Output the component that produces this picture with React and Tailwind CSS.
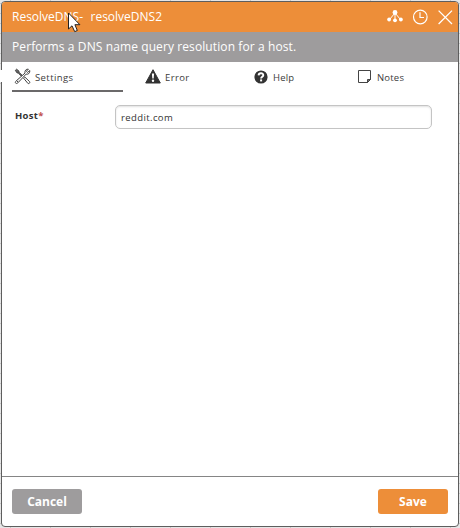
import React from 'react';

function NodesIcon() {
  return (
    <svg width="16" height="13" viewBox="0 0 16 13" className="-mt-px" fill="#fff" stroke="#fff">
      <path d="M8 3L2.5 9.5M8 3V10M8 3L13.5 9.5" fill="none" strokeWidth="1" />
      <g stroke="none">
        <circle cx="8" cy="2.5" r="2.4" />
        <circle cx="2.1" cy="9.5" r="1.9" />
        <circle cx="8" cy="10.3" r="1.9" />
        <circle cx="13.9" cy="9.5" r="1.9" />
      </g>
    </svg>
  );
}

function ClockIcon() {
  return (
    <svg width="16" height="16" viewBox="0 0 16 16" className="-mt-px" fill="none" stroke="#fff" strokeWidth="1.2">
      <circle cx="8.3" cy="8" r="6.8" />
      <path d="M8 3.2V8.5H12" />
    </svg>
  );
}

function CloseIcon() {
  return (
    <svg width="16" height="16" viewBox="0 0 16 16" className="-mt-px" fill="none" stroke="#fff" strokeWidth="1.3">
      <path d="M1.6 1.6L15 15M15 1.6L1.6 15" />
    </svg>
  );
}

function ToolsIcon() {
  return (
    <svg width="17" height="17" viewBox="0 0 17 17" fill="#fff" stroke="#444" strokeWidth="1" strokeLinejoin="round">
      <path d="M1.3 2.4L2.6 1.2L5 3.2L5 4.2L8.8 8L8 8.8L4.2 5L3.2 5Z" fill="#666" />
      <path d="M9.6 10.2L10.8 9L15.6 13.6C16.4 14.6 15 16.2 13.9 15.4Z" />
      <path d="M11 5.1C10.4 2.7 12.2 .7 14.4 1.2L12.4 3.2L13.5 4.5L15.8 2.5C16.2 5 14.2 6.8 12.1 6.1L3.8 14.9C2.3 16.5 .4 14.7 1.9 13.2Z" />
      <path d="M3 14L4.1 12.9" />
    </svg>
  );
}

function WarningIcon() {
  return (
    <svg width="16" height="15" viewBox="0 0 16 15">
      <path d="M8 .7L15.3 14H.7Z" fill="#333" stroke="#333" strokeLinejoin="round" />
      <path d="M6.9 4.6H9.1L8.7 9.6H7.3Z" fill="#fff" />
      <circle cx="8" cy="11.7" r="1.2" fill="#fff" />
    </svg>
  );
}

function HelpIcon() {
  return (
    <svg width="14" height="14" viewBox="0 0 14 14" className="mt-px">
      <circle cx="7" cy="7" r="6.6" fill="#333" />
      <path d="M4.6 5.4C4.7 2.5 9.4 2.5 9.3 5.1C9.2 6.7 7.1 6.7 7.1 8.6" fill="none" stroke="#fff" strokeWidth="1.9" />
      <rect x="6.1" y="9.4" width="2" height="2" fill="#fff" />
    </svg>
  );
}

function NoteIcon() {
  return (
    <svg width="14" height="14" viewBox="0 0 14 14" className="mt-px" fill="none" stroke="#444" strokeWidth="1">
      <path d="M.5 .5H12.5V9.5L9.5 12.5H.5Z" />
      <path d="M9.5 12.5V9.5H12.5Z" fill="#777" />
    </svg>
  );
}

function Tab({ icon, label, active, className, labelClass }) {
  return (
    <div className={`flex h-[30px] items-center border-b-2 ${active ? 'border-[#6b696a]' : 'border-transparent'} ${className}`}>
      <span className="flex h-4 items-center">{icon}</span>
      <span className={`mt-[3px] text-[9.5px] leading-4 text-[#3c3c3c] ${labelClass}`}>{label}</span>
    </div>
  );
}

export default function App() {
  return (
    <div className="relative h-[528px] w-[460px] overflow-hidden bg-[#e6e6e6] bg-[linear-gradient(#c6c6c6_1px,transparent_1px),linear-gradient(90deg,#c6c6c6_1px,transparent_1px)] bg-[size:10px_10px,40px_40px] bg-[position:0_3px,10px_0] pt-px pl-px font-['Open_Sans','Noto_Sans',sans-serif] text-[#333]">
      <div className="flex h-[526px] w-[458px] flex-col overflow-hidden rounded-[4px] border border-[#5e5e5e] bg-white">
        <header className="flex h-[30px] shrink-0 items-center justify-between bg-[#ed8e39] pr-[5px] pl-[10px] text-white">
          <h1 className="flex text-[12px] leading-4 font-medium whitespace-pre">
            <span className="w-[78.5px]">ResolveDNS- </span>
            <span>resolveDNS2</span>
          </h1>
          <div className="flex items-center gap-[9px]">
            <NodesIcon />
            <ClockIcon />
            <CloseIcon />
          </div>
        </header>
        <p className="h-[30px] shrink-0 bg-[#9e9c9d] pl-[10px] text-[12px] leading-[30px] font-medium tracking-[0.1px] text-white">
          Performs a DNS name query resolution for a host.
        </p>
        <nav className="flex shrink-0 pl-[10px]">
          <Tab icon={<ToolsIcon />} label="Settings" active className="w-[111px] pl-[2px]" labelClass="ml-[4px] tracking-[0.4px]" />
          <Tab icon={<WarningIcon />} label="Error" className="w-[109px] pl-[22px]" labelClass="ml-[4px] tracking-[0.4px]" />
          <Tab icon={<HelpIcon />} label="Help" className="w-[104px] pl-[22px]" labelClass="ml-[5px] tracking-[0.2px]" />
          <Tab icon={<NoteIcon />} label="Notes" className="w-[100px] pl-[22px]" labelClass="ml-[5px] tracking-[0.2px]" />
        </nav>
        <main className="flex grow items-start pt-[13px] pl-[13px]">
          <label className="mt-[3px] w-[100px] text-[9.5px] leading-4 font-bold tracking-[0.3px]">
            Host<span className="text-[#c0504d]">*</span>
          </label>
          <div className="h-6 w-[317px] rounded-[5px] border border-[#c4c4c4] bg-white pl-[5px] text-[9.5px] leading-[23px] tracking-[0.4px] shadow-[inset_0_1px_2px_rgba(0,0,0,0.12)]">
            reddit.com
          </div>
        </main>
        <footer className="flex h-[50px] shrink-0 items-center justify-between border-t border-[#858585] px-[10px] pb-px">
          <button className="h-[25px] w-[70px] rounded-[3px] bg-[#9e9c9d] text-[12px] leading-[25px] font-bold text-white">Cancel</button>
          <button className="h-[25px] w-[70px] rounded-[3px] bg-[#ed8e39] text-[12px] leading-[25px] font-bold text-white">Save</button>
        </footer>
      </div>
      <span className="absolute top-[70px] left-0 h-3 w-[2px] bg-white" />
      <svg className="absolute top-[12px] left-[67px]" width="14" height="21" viewBox="0 0 14 21">
        <path d="M1.5 1V17L5 13.8L7.7 19.6L10.3 18.5L7.9 12.7H12.9Z" fill="#fff" stroke="#222" strokeWidth="1" />
      </svg>
    </div>
  );
}
